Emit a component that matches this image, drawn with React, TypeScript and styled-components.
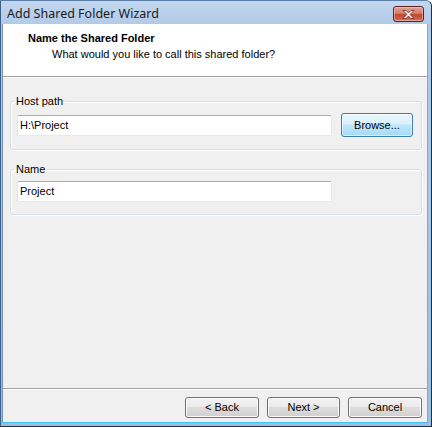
import React from "react";
import styled, { createGlobalStyle } from "styled-components";

const Global = createGlobalStyle`
  html, body { margin: 0; padding: 0; background: #ffffff; }
  body { font-family: Tahoma, "Liberation Sans", Arial, sans-serif; font-size: 11px; color: #000; }
  * { box-sizing: border-box; }
`;

const Window = styled.div`
  width: 432px;
  height: 427px;
  display: flex;
  flex-direction: column;
  background: linear-gradient(180deg, #c3d7ee 0px, #b0cae7 24px, #9ebde0 100%);
  border-left: 1px solid #3b5f85;
  border-right: 1px solid #1d2f45;
  border-bottom: 1px solid #1d2f45;
  border-top: 1px solid #5a7ea8;
  border-top-right-radius: 6px;
  overflow: hidden;
`;

const TitleBar = styled.div`
  height: 23px;
  flex: none;
  display: flex;
  align-items: center;
  justify-content: space-between;
  padding: 0 6px 0 6px;
`;

const TitleText = styled.span`
  font-family: "Noto Sans", "Open Sans", sans-serif;
  font-size: 12.5px;
  color: #1a1a1a;
  margin-top: 1px;
`;

const CloseButton = styled.div`
  width: 31px;
  height: 16px;
  margin-top: 3px;
  margin-right: 1px;
  border: 1px solid #5e2121;
  border-radius: 3px;
  background: linear-gradient(180deg, #e2a193 0%, #d57c6a 45%, #c2452e 55%, #d2705a 100%);
  box-shadow: inset 0 0 0 1px rgba(255, 210, 200, 0.55);
  display: flex;
  align-items: center;
  justify-content: center;
`;

const Client = styled.div`
  flex: 1;
  display: flex;
  flex-direction: column;
  margin: 0 3px 3px 1px;
  background: #f0f0f0;
  border-left: 1px solid #6f93ba;
  border-right: 1px solid #3fc4f2;
  border-bottom: 1px solid #3fc4f2;
`;

const Header = styled.div`
  height: 53px;
  flex: none;
  background: #ffffff;
  border-bottom: 1px solid #a0a0a0;
  box-shadow: 0 1px 0 #ffffff;
  padding: 8px 0 0 25px;
  display: flex;
  flex-direction: column;
  gap: 3px;
`;

const HeaderTitle = styled.div`
  font-weight: bold;
  font-size: 11px;
  line-height: 13px;
`;

const HeaderSub = styled.div`
  padding-left: 24px;
  line-height: 13px;
`;

const Body = styled.div`
  flex: 1;
  display: flex;
  flex-direction: column;
  gap: 13px;
  padding: 18px 5px 0 7px;
`;

const Group = styled.fieldset<{ $h: number }>`
  margin: 0;
  padding: 5px 6px 12px 6px;
  border: 1px solid #d5dfe5;
  border-radius: 3px;
  box-shadow: inset 1px 1px 0 #ffffff, 1px 1px 0 #ffffff;
  min-height: ${(p) => p.$h}px;
`;

const Legend = styled.legend`
  padding: 0 2px;
  margin-left: -3px;
  line-height: 13px;
`;

const Row = styled.div`
  display: flex;
  align-items: center;
  gap: 9px;
`;

const TextBox = styled.div`
  width: 315px;
  height: 21px;
  background: #ffffff;
  border: 1px solid #e3e9ef;
  border-top-color: #abadb3;
  border-left-color: #e2e3ea;
  border-radius: 2px;
  padding: 3px 0 0 2px;
  line-height: 13px;
`;

const Button = styled.div<{ $w: number; $active?: boolean }>`
  width: ${(p) => p.$w}px;
  height: ${(p) => (p.$active ? 24 : 21)}px;
  border: 1px solid ${(p) => (p.$active ? "#3c7fb1" : "#707070")};
  border-radius: 3px;
  background: ${(p) =>
    p.$active
      ? "linear-gradient(180deg, #eaf6fd 0%, #d9f0fc 45%, #bee6fd 50%, #a7d9f5 100%)"
      : "linear-gradient(180deg, #f2f2f2 0%, #ebebeb 45%, #dddddd 50%, #cfcfcf 100%)"};
  box-shadow: inset 0 0 0 1px ${(p) => (p.$active ? "rgba(255,255,255,0.55)" : "#fcfcfc")};
  display: flex;
  align-items: center;
  justify-content: center;
  line-height: 13px;
`;

const Footer = styled.div`
  height: 34px;
  flex: none;
  border-top: 1px solid #a0a0a0;
  box-shadow: inset 0 1px 0 #ffffff;
  display: flex;
  justify-content: flex-end;
  align-items: flex-start;
  gap: 8px;
  padding: 8px 5px 0 0;
`;

export default function App() {
  return (
    <>
      <Global />
      <Window>
        <TitleBar>
          <TitleText>Add Shared Folder Wizard</TitleText>
          <CloseButton>
            <svg width="13" height="11" viewBox="0 0 13 11">
              <path
                d="M1 1.5 L4 1.5 L6.5 4 L9 1.5 L12 1.5 L8 5.5 L12 9.5 L9 9.5 L6.5 7 L4 9.5 L1 9.5 L5 5.5 Z"
                fill="#ffffff"
                stroke="#6a2a22"
                strokeWidth="0.8"
                strokeLinejoin="round"
              />
            </svg>
          </CloseButton>
        </TitleBar>
        <Client>
          <Header>
            <HeaderTitle>Name the Shared Folder</HeaderTitle>
            <HeaderSub>What would you like to call this shared folder?</HeaderSub>
          </Header>
          <Body>
            <Group $h={48}>
              <Legend>Host path</Legend>
              <Row>
                <TextBox>H:\Project</TextBox>
                <Button $w={72} $active>
                  Browse...
                </Button>
              </Row>
            </Group>
            <Group $h={52}>
              <Legend>Name</Legend>
              <Row>
                <TextBox>Project</TextBox>
              </Row>
            </Group>
          </Body>
          <Footer>
            <Button $w={74}>&lt; Back</Button>
            <Button $w={73}>Next &gt;</Button>
            <Button $w={74}>Cancel</Button>
          </Footer>
        </Client>
      </Window>
    </>
  );
}
